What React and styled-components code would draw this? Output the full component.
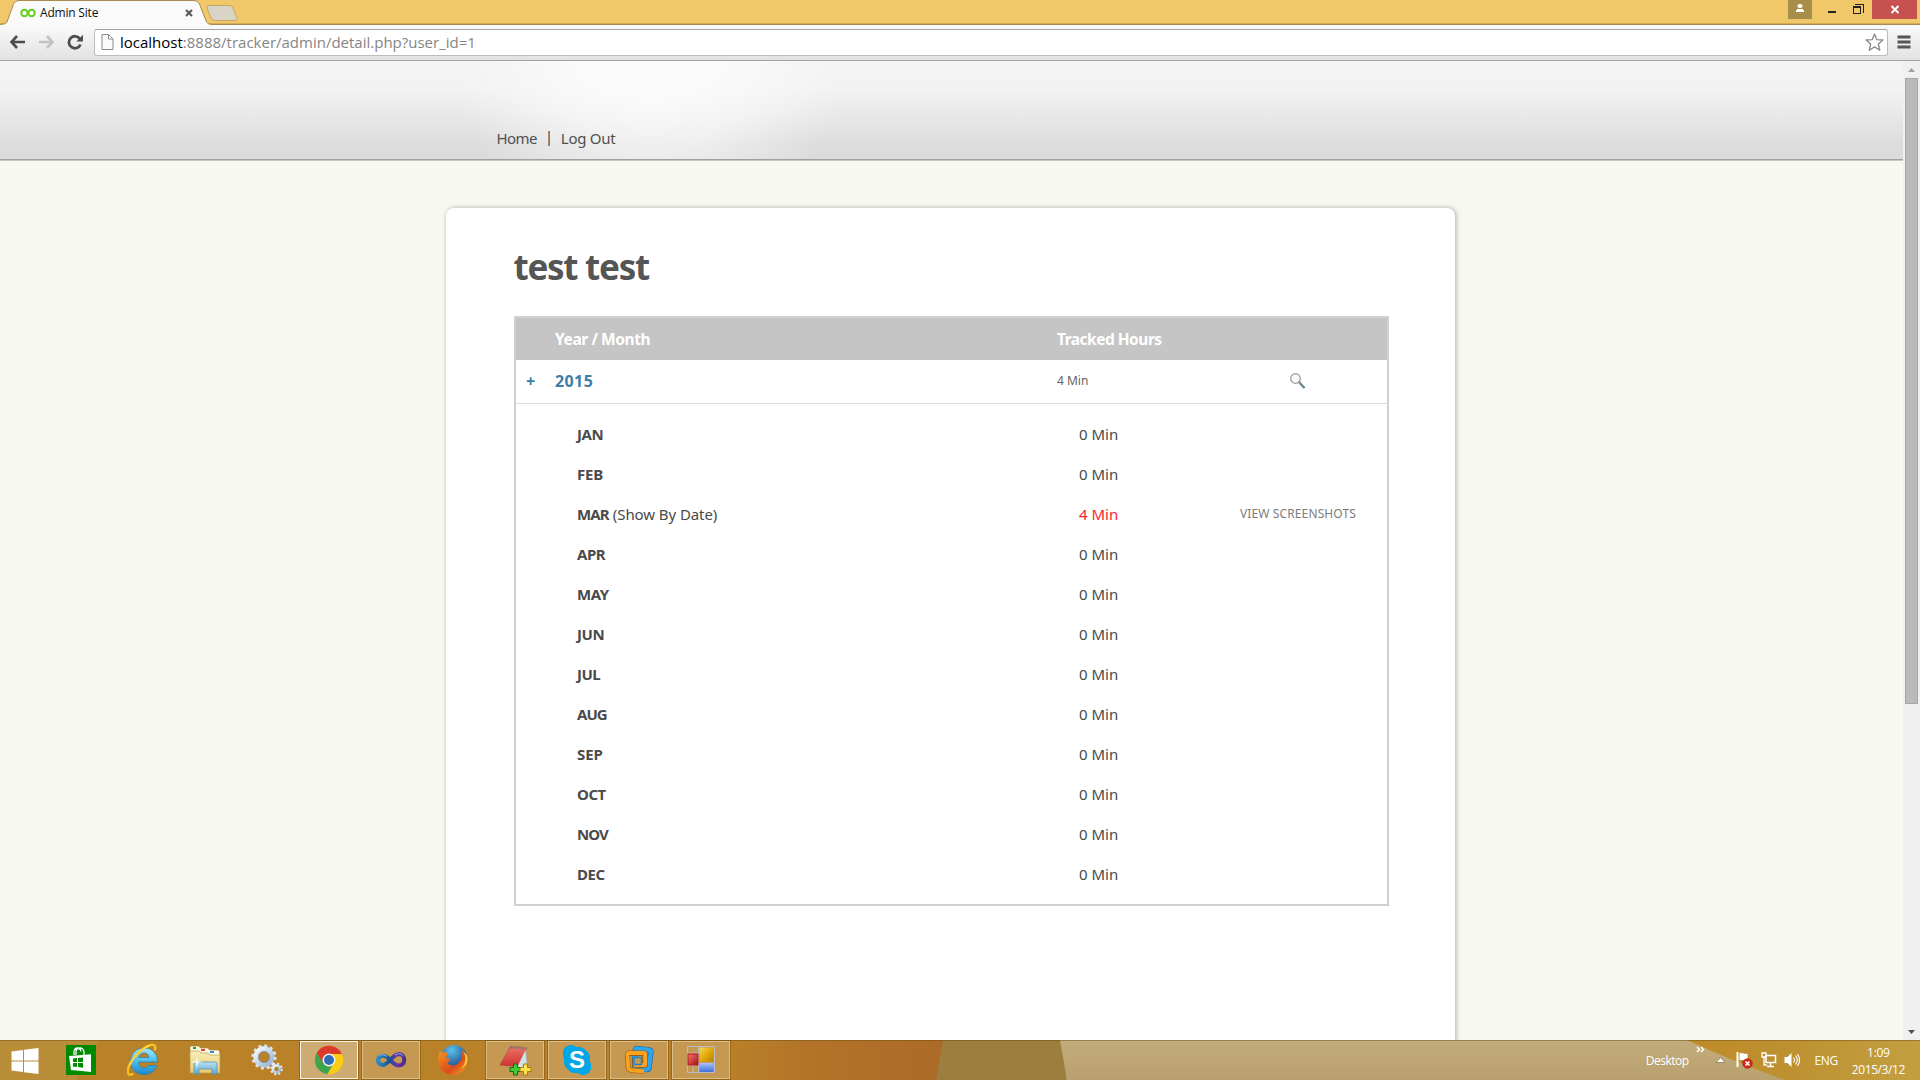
import React from "react";
import styled, { createGlobalStyle, css } from "styled-components";

const GlobalStyle = createGlobalStyle`
  * { box-sizing: border-box; }
  html, body { margin: 0; padding: 0; overflow: hidden; }
  body { font-family: "Noto Sans", "Open Sans", sans-serif; color: #4a4a4a; }
  svg { display: block; flex: none; }
`;

const Screen = styled.div`
  width: 1920px;
  height: 1080px;
  display: flex;
  flex-direction: column;
  overflow: hidden;
  background: #f7f8f0;
`;

/* ---------- browser chrome ---------- */
const TabStrip = styled.div`
  height: 25px;
  flex: none;
  display: flex;
  justify-content: space-between;
  background: linear-gradient(#f0c869 0 23px, #d6ad55 23px 24px, #a98b4b 24px);
`;
const Tabs = styled.div`
  display: flex;
  height: 25px;
`;
const Tab = styled.div`
  position: relative;
  width: 210px;
  height: 25px;
`;
const TabShape = styled.svg`
  position: absolute;
  left: 0;
  top: 0;
`;
const TabContent = styled.div`
  position: relative;
  display: flex;
  align-items: center;
  height: 25px;
  padding: 1px 17px 0 20px;
`;
const TabTitle = styled.span`
  flex: 1;
  padding: 0 0 1px 4px;
  font: 12px/20px "Open Sans", "Noto Sans", sans-serif;
  letter-spacing: -0.2px;
  color: #111;
`;
const NewTab = styled.svg`
  margin: 5px 0 0 -5px;
  position: relative;
`;
const Controls = styled.div`
  display: flex;
  height: 19px;
  padding-right: 3px;
`;
const Control = styled.div`
  width: ${(p) => p.$w}px;
  height: 19px;
  background: ${(p) => p.$bg || "transparent"};
`;
const Toolbar = styled.div`
  height: 36px;
  flex: none;
  display: flex;
  align-items: center;
  padding: 0 9px 1px 9px;
  background: linear-gradient(#fafafa, #e2e2e2);
  border-bottom: 1px solid #a3a3a3;
`;
const NavButtons = styled.div`
  width: 85px;
  display: flex;
  gap: 12px;
`;
const Omnibox = styled.div`
  flex: 1;
  height: 27px;
  display: flex;
  align-items: center;
  padding: 0 3px 0 6px;
  background: #fff;
  border: 1px solid #bcbcbc;
  border-top-color: #a2a2a2;
  border-radius: 3px;
`;
const Url = styled.span`
  flex: 1;
  padding: 0 0 1px 6px;
  font: 15px/24px "Open Sans", "Noto Sans", sans-serif;
  letter-spacing: 0;
  color: #858585;
  b { font-weight: 400; color: #000; }
`;
const MenuIcon = styled.svg`
  margin-left: 9px;
`;

/* ---------- page ---------- */
const Viewport = styled.div`
  height: 979px;
  flex: none;
  display: flex;
`;
const Page = styled.div`
  width: 1903px;
  height: 979px;
  overflow: hidden;
`;
const Header = styled.header`
  height: 100px;
  padding-top: 67px;
  border-bottom: 1px solid #c8c8c8;
  box-shadow: inset 0 -1px #a0a0a0;
  background:
    radial-gradient(ellipse 190px 135px at 650px 30px, rgba(255,255,255,.72), rgba(255,255,255,.52) 45%, rgba(255,255,255,0)),
    linear-gradient(#f4f4f4, #f2f2f2 28px, #ebebeb 48px, #dcdcdc 84px, #dbdbdb);
`;
const Nav = styled.nav`
  width: 910px;
  margin: 0 auto;
  display: flex;
  align-items: center;
  line-height: 20px;
`;
const NavLink = styled.span`
  font-size: 15px;
  letter-spacing: ${(p) => p.$ls}px;
  color: #505050;
`;
const Bar = styled.i`
  width: 2px;
  height: 15px;
  margin: 0 11px;
  background: linear-gradient(90deg, #a88a6a 1px, #5f86a0 1px);
`;
const Card = styled.main`
  width: 1009px;
  height: 900px;
  margin: 47px 0 0 446px;
  padding: 38px 66px 0 68px;
  background: #fff;
  border-radius: 8px;
  box-shadow: 1px 0 5px rgba(70, 75, 60, .42);
`;
const Title = styled.h1`
  margin: 0 0 28px -0.5px;
  font-size: 35px;
  line-height: 42px;
  font-weight: 700;
  letter-spacing: -1.27px;
  color: #555;
`;
const Table = styled.section`
  height: 590px;
  border: 2px solid #d0d0d0;
`;
const HeadRow = styled.div`
  display: flex;
  height: 42px;
  line-height: 42px;
  padding-left: 39px;
  background: #c5c5c5;
  color: #fff;
`;
const YearRow = styled.div`
  display: flex;
  align-items: center;
  height: 44px;
  line-height: 43px;
  padding-left: 10px;
  border-bottom: 1px solid #dedede;
  color: #3c7ea6;
`;
const YearTotal = styled.div`
  width: 232px;
  padding-bottom: 2px;
  font-size: 12px;
  line-height: 41px;
  color: #666;
`;
const Magnifier = styled.svg`
  margin-bottom: 2px;
`;
const Months = styled.div`
  padding: 10px 0 0 61px;
`;
const Row = styled.div`
  display: flex;
  align-items: center;
  height: 40px;
  line-height: 40px;
`;
const Cell = styled.div`
  width: ${(p) => p.$w}px;
  white-space: nowrap;
`;
const Text = styled.span`
  font-size: ${(p) => p.$size || 15}px;
  font-weight: ${(p) => (p.$bold ? 700 : 400)};
  letter-spacing: ${(p) => p.$ls || 0}px;
  color: ${(p) => p.$color || "inherit"};
`;
const Scrollbar = styled.div`
  width: 17px;
  display: flex;
  flex-direction: column;
  align-items: center;
  justify-content: space-between;
  background: #f0f0f0;
`;
const Thumb = styled.div`
  width: 13px;
  height: 626px;
  margin-bottom: 319px;
  background: #bababa;
  border: 1px solid #a6a6a6;
`;

/* ---------- taskbar ---------- */
const Taskbar = styled.footer`
  position: relative;
  height: 40px;
  flex: none;
  display: flex;
  justify-content: space-between;
`;
const Wallpaper = styled.svg`
  position: absolute;
  left: 0;
  top: 0;
`;
const Apps = styled.div`
  position: relative;
  display: flex;
  padding-top: 1px;
`;
const Start = styled.div`
  width: 50px;
  height: 39px;
  display: flex;
  align-items: center;
  justify-content: center;
`;
const TaskButton = styled.div`
  width: 58px;
  height: 38px;
  margin: 0 2px;
  display: flex;
  align-items: center;
  justify-content: center;
  ${(p) => p.$open && css`
    background: rgba(214, 186, 140, ${p.$active ? 0.75 : 0.42});
    border: 1px solid ${p.$active ? "#fbf4e8" : "#d9bd8b"};
    box-shadow: 0 0 0 1px rgba(110, 70, 10, .45);
  `}
`;
const Tray = styled.div`
  position: relative;
  display: flex;
  align-items: center;
  padding-right: 15px;
  color: #fff;
  font: 12px/17px "Open Sans", "Noto Sans", sans-serif;
`;
const TrayText = styled.span`
  letter-spacing: ${(p) => p.$ls}px;
  margin-right: ${(p) => p.$mr}px;
`;
const TrayIcon = styled.svg`
  margin-right: ${(p) => p.$mr}px;
`;
const Clock = styled.div`
  display: flex;
  flex-direction: column;
  align-items: center;
  padding-top: 2px;
`;

const MONTHS = ["JAN", "FEB", "MAR", "APR", "MAY", "JUN", "JUL", "AUG", "SEP", "OCT", "NOV", "DEC"];
const TIGHT = { MAR: -0.9, AUG: -1, NOV: -0.9, FEB: -0.2, SEP: -0.1, JUL: -0.5 };

const StoreIcon = () => (
  <svg width="30" height="30" viewBox="0 0 30 30">
    <rect width="30" height="30" fill="#008a00" />
    <path d="M8 10V7.500a3 3.500 0 0 1 7-1M10 10V7a4 4 0 0 1 8 0v3M9 5q2-3 5-.5" fill="none" stroke="#fff" strokeWidth="1.300" />
    <path d="M3 11l22-1.800v17.800L5 25z" fill="#fff" />
    <path d="M7 13.500l4-.400v4H7zM12 13l5-.500v4.600h-5zM7 18h4v4l-4-.400zM12 18h5v4.700l-5-.600z" fill="#008a00" />
  </svg>
);
const IeIcon = () => (
  <svg width="32" height="34" viewBox="0 0 32 34">
    <defs>
      <linearGradient id="ie" x1="0" y1="0" x2="0" y2="1"><stop offset="0" stopColor="#a6e9fb" /><stop offset=".5" stopColor="#4bbdec" /><stop offset="1" stopColor="#1c86c9" /></linearGradient>
    </defs>
    <path d="M30.500 19H11.500c.3 4 2.400 5.800 5.200 5.800 2.200 0 3.700-.9 4.600-2.300h8.500C28 28 23.500 31.500 17 31.500 9 31.500 3.500 26 3.500 18.300S9.300 5 17 5c8.500 0 13.700 5.800 13.500 14zM22 14.500c-.4-3-2.300-4.600-5-4.600s-4.800 1.700-5.300 4.600z" fill="url(#ie)" stroke="#1c7fb5" strokeWidth=".7" />
    <path d="M5.500 31C2 33-1 30.500 2 23 6 13.500 15 5 23 2.200c4-1.300 6 .5 5 4.300" fill="none" stroke="#f6c31c" strokeWidth="2.400" strokeLinecap="round" />
    <path d="M2.500 22.500C6.500 13.500 15 5.200 23 2.400" fill="none" stroke="#ffe88a" strokeWidth=".8" />
  </svg>
);
const FolderIcon = () => (
  <svg width="34" height="32" viewBox="0 0 34 32">
    <defs>
      <linearGradient id="fo" x1="0" y1="0" x2="0" y2="1"><stop offset="0" stopColor="#f9eeb8" /><stop offset="1" stopColor="#e6cc70" /></linearGradient>
      <linearGradient id="fb" x1="0" y1="0" x2="0" y2="1"><stop offset="0" stopColor="#b8e0f2" /><stop offset="1" stopColor="#5ea6cf" /></linearGradient>
    </defs>
    <path d="M2 8V3q0-1 1-1h8l1.500 2H20l1.500 2H31l1 4v2H2z" fill="#fffbe6" stroke="#a8873a" strokeWidth=".7" />
    <path d="M5 3h3v2H5z" fill="#1aa32e" /><path d="M13 5h4v2h-4z" fill="#d64335" /><path d="M22 7h4v2h-4z" fill="#2a8fd8" />
    <path d="M2 7h9l2 2h7l2 2h10v18H2z" fill="url(#fo)" stroke="#b79a4a" strokeWidth=".7" />
    <path d="M6 30V20q0-2 2-2h19q2 0 2 2v10h-5v-5H11v5z" fill="url(#fb)" stroke="#5a93b0" strokeWidth=".8" />
    <path d="M9 12l1 5 5 1-5 1-1 5-1-5-5-1 5-1z" fill="#fff" opacity=".8" />
  </svg>
);
const GearsIcon = () => (
  <svg width="34" height="32" viewBox="0 0 34 32">
    <defs><linearGradient id="ge" x1="0" y1="0" x2="1" y2="1"><stop offset="0" stopColor="#f6fbff" /><stop offset="1" stopColor="#93b2d4" /></linearGradient></defs>
    <circle cx="14" cy="13" r="8.200" fill="none" stroke="url(#ge)" strokeWidth="5" />
    <circle cx="14" cy="13" r="11.300" fill="none" stroke="#dbe7f3" strokeWidth="2.600" strokeDasharray="2.950 2.960" />
    <circle cx="14" cy="13" r="5.600" fill="none" stroke="#7590ae" strokeWidth=".8" />
    <circle cx="26.500" cy="25" r="3.500" fill="none" stroke="url(#ge)" strokeWidth="2.600" />
    <circle cx="26.500" cy="25" r="5.400" fill="none" stroke="#e3ebf5" strokeWidth="1.800" strokeDasharray="2.100 2.140" />
  </svg>
);
const ChromeIcon = () => (
  <svg width="30" height="30" viewBox="0 0 30 30">
    <path d="M27.800 9A14 14 0 0 1 13.500 29l6-11L15 9z" fill="#fbcc12" />
    <path d="M2.700 8A14 14 0 0 0 13.500 29l6.200-11H9.500z" fill="#3ea64a" />
    <path d="M2.700 8L9 18l6-9h12.800A14 14 0 0 0 2.700 8z" fill="#dc3a2b" />
    <circle cx="15" cy="15" r="6.500" fill="#f4f4ee" /><circle cx="15" cy="15" r="5" fill="#2b6db8" />
  </svg>
);
const VsIcon = () => (
  <svg width="32" height="18" viewBox="0 0 32 18">
    <defs><linearGradient id="vs" x1="0" y1="0" x2="1" y2="0"><stop offset="0" stopColor="#2e8ac6" /><stop offset=".45" stopColor="#1e4f94" /><stop offset=".7" stopColor="#6a35a8" /><stop offset="1" stopColor="#4a2a8c" /></linearGradient></defs>
    <path d="M15.500 9.500C12 5.500 9.500 4.500 7.500 4.800c-6 1-6 8.400 0 9.200C12.500 14.500 18 3 24 3c7 .3 7 11.500 0 11.500-3.500 0-5.500-2-8.500-5z" fill="none" stroke="url(#vs)" strokeWidth="4" />
    <path d="M4 5q4-3 8 .5M20 4q5-3 8.500 1" fill="none" stroke="#8fb8e8" strokeWidth="1" />
  </svg>
);
const FirefoxIcon = () => (
  <svg width="32" height="32" viewBox="0 0 32 32">
    <defs>
      <linearGradient id="ff" x1="0" y1="0" x2="1" y2="1"><stop offset="0" stopColor="#f39a22" /><stop offset=".6" stopColor="#de4a1c" /><stop offset="1" stopColor="#e9b020" /></linearGradient>
      <radialGradient id="fg" cx=".4" cy=".2" r=".8"><stop offset="0" stopColor="#5cc0ec" /><stop offset="1" stopColor="#123c7c" /></radialGradient>
    </defs>
    <circle cx="17" cy="14" r="13" fill="url(#fg)" />
    <path d="M3 7c1 1 2 1.500 4 1.500C9 7.500 10 8 11 9.500c-.5 2-2 2.500-1.500 4.500 2 0 3.500.5 4 2-1 1.500-3 1.500-2.500 3.500 2.500 3 8 2.500 10.500-.5 3-3 4.500-8 3.500-13 5.500 4 7 11 4.500 16-4 9-14 11-21 7C0 24 0 14 3 7z" fill="url(#ff)" />
    <path d="M26 7c4 6 3 14-3 18 7-2 10-11 5-16z" fill="#fbd43a" />
  </svg>
);
const NotesIcon = () => (
  <svg width="34" height="32" viewBox="0 0 34 32">
    <defs><linearGradient id="no" x1="0" y1="0" x2="0" y2="1"><stop offset="0" stopColor="#ee7268" /><stop offset="1" stopColor="#cc2f2b" /></linearGradient></defs>
    <path d="M27.500 4l2 20-12 3-7-5z" fill="#d3e0e6" stroke="#9aa8b0" strokeWidth=".6" />
    <path d="M12 3l16 1-9 19L2 21z" fill="url(#no)" stroke="#b94a42" strokeWidth=".6" />
    <path d="M13 1.500v3.500M16 1.500v3.500M19 2v3.500M22 2v3.500M25 2.500V6M28 3v3" stroke="#777" strokeWidth="1.200" />
    <path d="M15.500 20h4v3.500H23v4h-3.500V31h-4v-3.500H12v-4h3.500z" fill="#3ccb35" stroke="#176b14" strokeWidth="1" />
    <path d="M25.500 20h4v3.500H33v4h-3.500V31h-4v-3.500H22v-4h3.500z" fill="#ffe04a" stroke="#a77d0c" strokeWidth="1" />
  </svg>
);
const SkypeIcon = styled.span`
  width: 30px;
  height: 30px;
  display: flex;
  align-items: center;
  justify-content: center;
  font: 700 24px/30px "Liberation Sans", Arial, sans-serif;
  color: #fff;
  background:
    radial-gradient(circle 13.500px at 15px 15px, #00a6e5 98%, transparent),
    radial-gradient(circle 8.500px at 9px 8.500px, #00a6e5 96%, transparent),
    radial-gradient(circle 8.500px at 21px 21.500px, #00a6e5 96%, transparent);
`;
const VmIcon = () => (
  <svg width="30" height="30" viewBox="0 0 30 30">
    <path d="M12 3.500l13 1.500q2 .3 1.800 2.300L25 22.500q-.3 2-2.300 2L11 24l-.500-16z" fill="none" stroke="#17659e" strokeWidth="5.500" strokeLinejoin="round" />
    <path d="M12 3.500l13 1.500q2 .3 1.800 2.300L25 22.500q-.3 2-2.300 2L11 24l-.500-16z" fill="none" stroke="#2ea5ee" strokeWidth="4.300" strokeLinejoin="round" />
    <path d="M5 8.500l14.500 0q1.500 0 1.500 1.500V20H11v-6" fill="none" stroke="#9a5a10" strokeWidth="5" strokeLinejoin="round" />
    <path d="M20 26.500L6.500 25q-2-.3-2.200-2.300L3.500 10q0-2 2-2h14q1.700 0 1.700 1.700V20H11v-6" fill="none" stroke="#9a5a10" strokeWidth="5" strokeLinejoin="round" />
    <path d="M20 26.500L6.500 25q-2-.3-2.200-2.300L3.500 10q0-2 2-2h14q1.700 0 1.700 1.700V20H11v-6" fill="none" stroke="#fba31f" strokeWidth="3.800" strokeLinejoin="round" />
    <rect x="10" y="12.500" width="7.500" height="7" fill="#c49a55" stroke="#1d83c8" strokeWidth="1.500" />
  </svg>
);
const FormsIcon = () => (
  <svg width="28" height="28" viewBox="0 0 28 28">
    <defs>
      <linearGradient id="w1" x1="0" y1="0" x2="1" y2="1"><stop offset="0" stopColor="#f6dc5a" /><stop offset=".5" stopColor="#e5a90a" /><stop offset="1" stopColor="#b98200" /></linearGradient>
      <linearGradient id="w2" x1="0" y1="0" x2="1" y2="1"><stop offset="0" stopColor="#f07a72" /><stop offset="1" stopColor="#a80e0e" /></linearGradient>
      <linearGradient id="w3" x1="0" y1="0" x2="0" y2="1"><stop offset="0" stopColor="#a9c2f8" /><stop offset="1" stopColor="#3f6fd8" /></linearGradient>
    </defs>
    <path d="M.5.500h27v26H.5zM.5 7h11M.5 19.500h27M11.500.500v26M6 19.500v7" fill="none" stroke="#b9bcc6" />
    <rect x="12.500" y="1.500" width="14" height="14" fill="url(#w1)" /><rect x="1" y="8" width="10" height="11" fill="url(#w2)" stroke="#c21414" /><rect x="12.500" y="17" width="14" height="9" fill="url(#w3)" />
  </svg>
);

const APPS = [
  { icon: StoreIcon }, { icon: IeIcon }, { icon: FolderIcon }, { icon: GearsIcon },
  { icon: ChromeIcon, open: true, active: true }, { icon: VsIcon, open: true }, { icon: FirefoxIcon },
  { icon: NotesIcon, open: true }, { icon: () => <SkypeIcon>S</SkypeIcon>, open: true },
  { icon: VmIcon, open: true }, { icon: FormsIcon, open: true },
];

export default function App() {
  return (
    <Screen>
      <GlobalStyle />
      <TabStrip>
        <Tabs>
          <Tab>
            <TabShape width="212" height="25" viewBox="0 0 212 25">
              <path d="M0 24.500Q5 24.500 7 22L13.500 4Q15 .500 19 .500H194Q198 .500 199.500 4L206.500 22Q208 24.500 212 24.500V25H0z" fill="#fafafa" />
              <path d="M0 24.500Q5 24.500 7 22L13.500 4Q15 .500 19 .500H194Q198 .500 199.500 4L206.500 22Q208 24.500 212 24.500" fill="none" stroke="#a98b4b" />
            </TabShape>
            <TabContent>
              <svg width="16" height="10" viewBox="0 0 16 10"><circle cx="4.400" cy="5" r="3.200" fill="none" stroke="#62d01c" strokeWidth="2" /><circle cx="11.600" cy="5" r="3.200" fill="none" stroke="#62d01c" strokeWidth="2" /></svg>
              <TabTitle>Admin Site</TabTitle>
              <svg width="8" height="8" viewBox="0 0 8 8"><path d="M1 1l6 6M7 1L1 7" stroke="#555" strokeWidth="2" /></svg>
            </TabContent>
          </Tab>
          <NewTab width="33" height="16" viewBox="0 0 33 16"><path d="M3.500 .500H24Q27 .500 28 3L32 13Q32.500 15.500 30 15.500H10Q7 15.500 6 13L2 3Q1.500 .500 3.500 .500z" fill="#d8d4c6" stroke="#c3a566" /></NewTab>
        </Tabs>
        <Controls>
          <Control $w={24} $bg="#a88c4a"><svg width="24" height="19"><path d="M10.500 4h3v1h1v2h-1v1h-3V7h-1V5h1zM9 9h6v1h1v2H8v-2h1z" fill="#fff" /></svg></Control>
          <Control $w={30}><svg width="30" height="19"><path d="M16 11h8v2h-8z" fill="#222" /></svg></Control>
          <Control $w={30}><svg width="30" height="19"><path d="M13 4h9v9h-1V5h-8zM11 6h8v8h-8zM12 8v5h6V8z" fill="#222" fillRule="evenodd" /></svg></Control>
          <Control $w={45} $bg="#c75050"><svg width="45" height="19"><path d="M19.500 6l7 7M26.500 6l-7 7" stroke="#fff" strokeWidth="2" /></svg></Control>
        </Controls>
      </TabStrip>
      <Toolbar>
        <NavButtons>
          <svg width="17" height="16" viewBox="0 0 17 16"><path d="M8 2L2.500 8 8 14M3 8h13" fill="none" stroke="#4d4d4d" strokeWidth="2.600" /></svg>
          <svg width="17" height="16" viewBox="0 0 17 16"><path d="M9 2l5.500 6L9 14M14 8H1" fill="none" stroke="#c2c2c2" strokeWidth="2.600" /></svg>
          <svg width="17" height="16" viewBox="0 0 17 16"><path d="M13.500 10.500a6 6 0 1 1-.5-5.500" fill="none" stroke="#4d4d4d" strokeWidth="2.800" /><path d="M16 .800V7.500H9.300z" fill="#4d4d4d" /></svg>
        </NavButtons>
        <Omnibox>
          <svg width="13" height="16" viewBox="0 0 13 16"><path d="M1 .500h6.500l4.500 4.500v10.500H1zM7.500.500V5H12" fill="#fbfbfb" stroke="#8b8b8b" /></svg>
          <Url><b>localhost</b>:8888/tracker/admin/detail.php?user_id=1</Url>
          <svg width="19" height="18" viewBox="0 0 19 18"><path d="M9.500 1l2.300 5.700 6.200.300-4.700 4 1.500 6.200-5.300-3.300-5.300 3.300 1.500-6.200L1 7l6.200-.300z" fill="#fff" stroke="#8a8a8a" strokeWidth="1.300" strokeLinejoin="round" /></svg>
        </Omnibox>
        <MenuIcon width="14" height="14"><path d="M.500 2h13M.500 7h13M.500 12h13" stroke="#555" strokeWidth="3" /></MenuIcon>
      </Toolbar>

      <Viewport>
        <Page>
          <Header>
            <Nav>
              <NavLink $ls={-0.6}>Home</NavLink><Bar /><NavLink $ls={-0.25}>Log Out</NavLink>
            </Nav>
          </Header>
          <Card>
            <Title>test test</Title>
            <Table>
              <HeadRow>
                <Cell $w={502}><Text $bold $size={15.5} $ls={-0.4}>Year / Month</Text></Cell>
                <Text $bold $size={15.5} $ls={-0.5}>Tracked Hours</Text>
              </HeadRow>
              <YearRow>
                <Cell $w={29}><Text $bold $size={16}>+</Text></Cell>
                <Cell $w={502}><Text $bold $size={16} $ls={0.4}>2015</Text></Cell>
                <YearTotal>4 Min</YearTotal>
                <Magnifier width="18" height="18" viewBox="0 0 18 18"><circle cx="6.500" cy="6.500" r="4.800" fill="#f8f8f8" stroke="#999" strokeWidth="1.200" /><path d="M10 10l5.500 6" stroke="#5d7480" strokeWidth="2.400" /><path d="M10.500 10l5 5" stroke="#a8c4cc" strokeWidth=".8" /></Magnifier>
              </YearRow>
              <Months>
                {MONTHS.map((m) => (
                  <Row key={m}>
                    <Cell $w={502}>
                      <Text $bold $ls={TIGHT[m] ?? -0.45}>{m}</Text>
                      {m === "MAR" && <>{" "}<Text $ls={-0.08}>(Show By Date)</Text></>}
                    </Cell>
                    <Cell $w={161}><Text $color={m === "MAR" ? "#fb1c35" : undefined}>{m === "MAR" ? "4 Min" : "0 Min"}</Text></Cell>
                    {m === "MAR" && <Text $size={12} $ls={0.12} $color="#7c7c7c">VIEW SCREENSHOTS</Text>}
                  </Row>
                ))}
              </Months>
            </Table>
          </Card>
        </Page>
        <Scrollbar>
          <svg width="17" height="17"><path d="M5 11h7L8.500 7z" fill="#a0a0a0" /></svg>
          <Thumb />
          <svg width="17" height="17"><path d="M5 7h7l-3.500 4z" fill="#505050" /></svg>
        </Scrollbar>
      </Viewport>

      <Taskbar>
        <Wallpaper width="1920" height="40" viewBox="0 0 1920 40" preserveAspectRatio="none">
          <defs>
            <linearGradient id="t1"><stop offset="0" stopColor="#b98128" /><stop offset=".77" stopColor="#b98128" /><stop offset=".85" stopColor="#b37428" /><stop offset="1" stopColor="#ac6a28" /></linearGradient>
            <linearGradient id="t2" x1="0" y1="0" x2="0" y2="1"><stop offset="0" stopColor="#c3ac7b" /><stop offset="1" stopColor="#b9a06f" /></linearGradient>
            <linearGradient id="t3"><stop offset="0" stopColor="#c08a28" /><stop offset=".4" stopColor="#bd9030" /><stop offset="1" stopColor="#c39f40" /></linearGradient>
          </defs>
          <rect width="945" height="40" fill="url(#t1)" />
          <path d="M0 0H100Q85 18 76 40H0z" fill="#b98d38" />
          <path d="M943 0h120l4 40H936z" fill="#9c7e3e" />
          <path d="M1060 0h860v40H1067z" fill="url(#t2)" />
          <path d="M1687 0H1920V40H1785Q1735 22 1687 0z" fill="url(#t3)" />
          <path d="M0 .500H1920" stroke="#6b4c10" strokeOpacity=".45" />
        </Wallpaper>
        <Apps>
          <Start><svg width="28" height="26" viewBox="0 0 28 26"><path d="M.5 3.500L12 2v10.500H.5zM13 1.800L27.500 0v12.500H13zM.5 13.500H12V24L.5 22.500zM13 13.500h14.500V26L13 24.200z" fill="#fff" /></svg></Start>
          {APPS.map(({ icon: Icon, open, active }, i) => (
            <TaskButton key={i} $open={open} $active={active}><Icon /></TaskButton>
          ))}
        </Apps>
        <Tray>
          <TrayText $ls={-0.5} $mr={7}>Desktop</TrayText>
          <TrayIcon $mr={11} width="9" height="38"><path d="M1 6l2.500 2.500L1 11M5 6l2.500 2.500L5 11" fill="none" stroke="#fff" strokeWidth="1.500" /></TrayIcon>
          <TrayIcon $mr={11} width="9" height="6"><path d="M0 5.500L4.500 .500 9 5.500z" fill="#fff" stroke="#5a4a20" strokeWidth=".5" /></TrayIcon>
          <TrayIcon $mr={8} width="17" height="18" viewBox="0 0 17 18"><path d="M1.500 1v15" stroke="#fff" strokeWidth="2" /><path d="M3.500 2.500c3-1.500 5 1.500 8 0v7c-3 1-5-1.500-8 0z" fill="#fff" /><circle cx="11.500" cy="12.500" r="4.800" fill="#d9281e" stroke="#8e120b" strokeWidth=".5" /><path d="M9.500 10.500l4 4M13.500 10.500l-4 4" stroke="#fff" strokeWidth="1.500" /></TrayIcon>
          <TrayIcon $mr={7} width="16" height="16" viewBox="0 0 16 16"><path d="M5 3.500h9.500v7H5zM9.500 11v3M6 14.500h7" fill="none" stroke="#fff" strokeWidth="1.500" /><path d="M1 1h4v4H1zM3 5v8h3" fill="none" stroke="#fff" strokeWidth="1.300" /></TrayIcon>
          <TrayIcon $mr={15} width="16" height="16" viewBox="0 0 16 16"><path d="M.5 5h3L7.500 1v14l-4-4H.5z" fill="#fff" /><path d="M9.500 5.500q2 2.500 0 5M11.500 3.500q3.500 4.500 0 9M13.500 2q4 6 0 12" fill="none" stroke="#fff" strokeWidth="1.100" /></TrayIcon>
          <TrayText $ls={-0.4} $mr={14}>ENG</TrayText>
          <Clock><TrayText $ls={-0.3} $mr={0}>1:09</TrayText><TrayText $ls={-0.4} $mr={0}>2015/3/12</TrayText></Clock>
        </Tray>
      </Taskbar>
    </Screen>
  );
}
